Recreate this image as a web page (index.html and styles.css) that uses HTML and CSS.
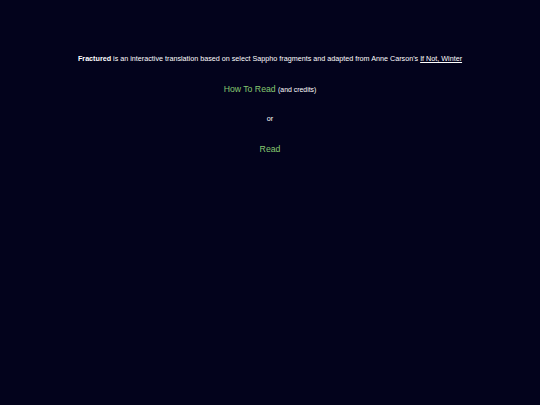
FILE: index.html
```html
<!DOCTYPE html>
<html>
<head>
<meta charset="utf-8">
<link rel="stylesheet" href="styles.css">
</head>
<body>
<main class="intro">
  <p class="desc"><b>Fractured</b> is an interactive translation based on select Sappho fragments and adapted from Anne Carson's <u>If Not, Winter</u></p>
  <p class="line"><a class="link">How To Read</a> <span class="small">(and credits)</span></p>
  <p class="or">or</p>
  <p class="line"><a class="link">Read</a></p>
</main>
</body>
</html>
```
FILE: styles.css
```css
html, body { margin: 0; padding: 0; background: #03031c; height: 100%; }
body { font-family: "Liberation Sans", Arial, sans-serif; color: #ffffff; }
.intro { display: flex; flex-direction: column; align-items: center; padding-top: 54px; }
.intro p { margin: 0; text-align: center; }
.desc { font-size: 7.2px; line-height: 10px; height: 30px; }
.line { font-size: 8.7px; line-height: 10px; height: 30px; }
.or { font-size: 7.2px; line-height: 10px; height: 30px; }
.link { color: #86c870; }
.small { font-size: 6.9px; }
```
